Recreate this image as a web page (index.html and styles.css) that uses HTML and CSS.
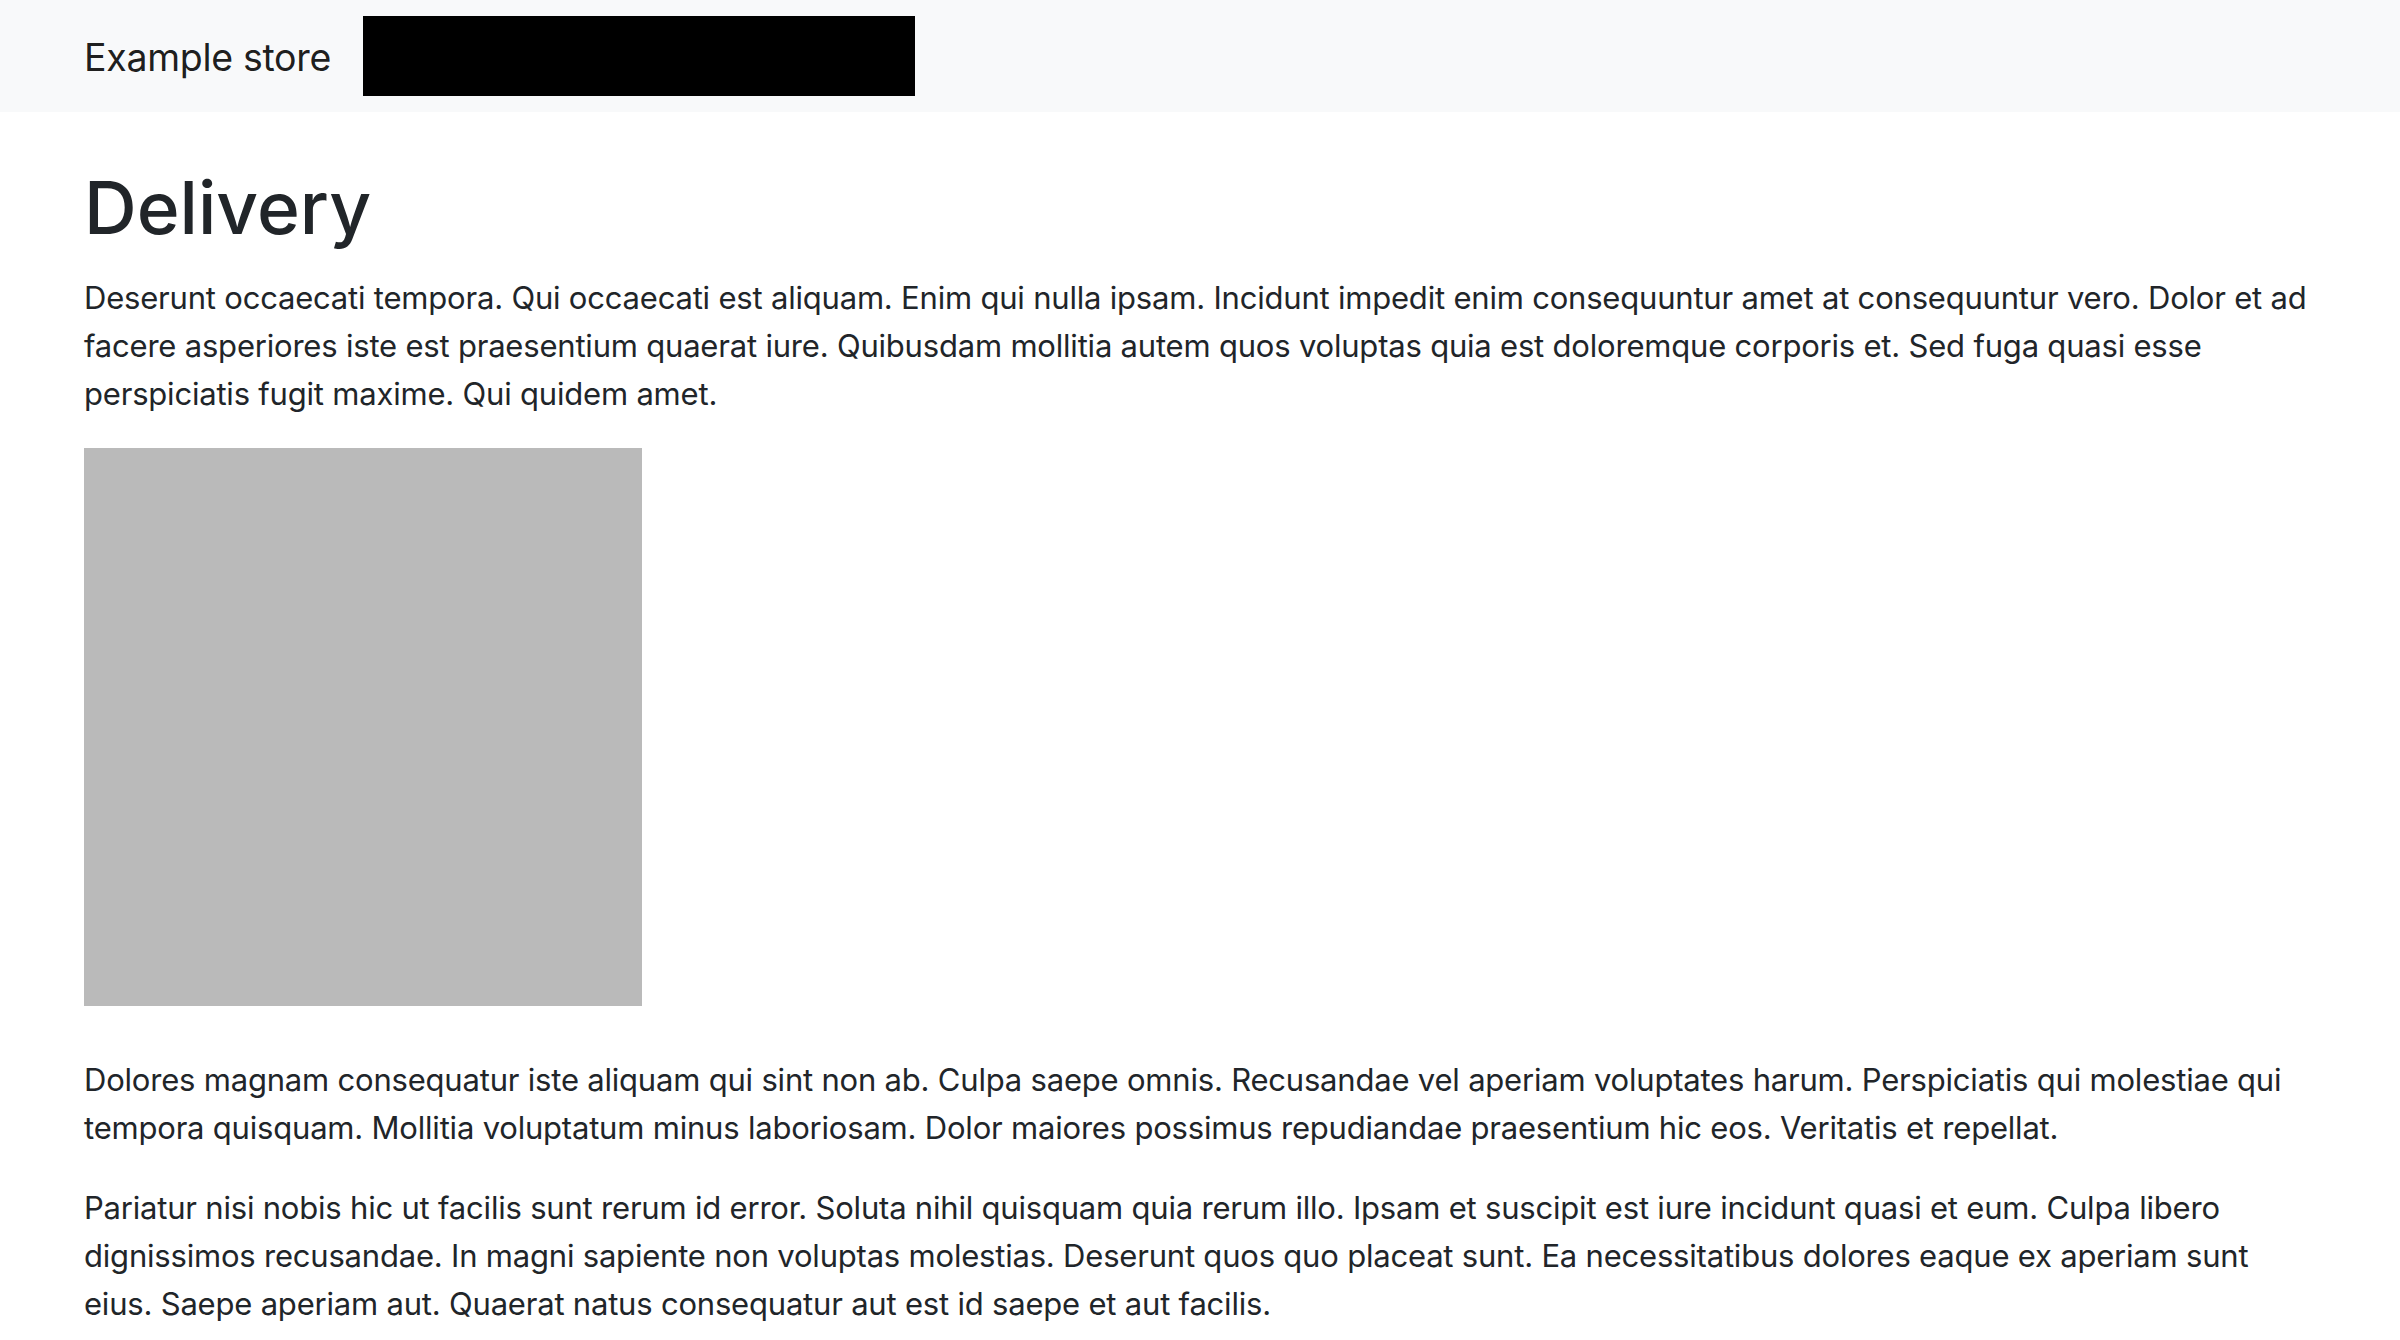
FILE: index.html
```html
<!DOCTYPE html>
<html lang="en">
<head>
<meta charset="utf-8">
<title>Delivery - Example store</title>
<link rel="stylesheet" href="styles.css">
</head>
<body>
<nav class="navbar">
  <a class="brand" href="#">Example store</a>
  <div class="redacted"></div>
</nav>
<main class="container">
  <h1 class="title">Delivery</h1>
  <p class="text">Deserunt occaecati tempora. Qui occaecati est aliquam. Enim qui nulla ipsam. Incidunt impedit enim consequuntur amet at consequuntur vero. Dolor et ad facere asperiores iste est praesentium quaerat iure. Quibusdam mollitia autem quos voluptas quia est doloremque corporis et. Sed fuga quasi esse perspiciatis fugit maxime. Qui quidem amet.</p>
  <div class="picture"></div>
  <p class="text">Dolores magnam consequatur iste aliquam qui sint non ab. Culpa saepe omnis. Recusandae vel aperiam voluptates harum. Perspiciatis qui molestiae qui tempora quisquam. Mollitia voluptatum minus laboriosam. Dolor maiores possimus repudiandae praesentium hic eos. Veritatis et repellat.</p>
  <p class="text">Pariatur nisi nobis hic ut facilis sunt rerum id error. Soluta nihil quisquam quia rerum illo. Ipsam et suscipit est iure incidunt quasi et eum. Culpa libero dignissimos recusandae. In magni sapiente non voluptas molestias. Deserunt quos quo placeat sunt. Ea necessitatibus dolores eaque ex aperiam sunt eius. Saepe aperiam aut. Quaerat natus consequatur aut est id saepe et aut facilis.</p>
</main>
</body>
</html>
```

FILE: styles.css
```css
html, body {
  margin: 0;
  padding: 0;
  background: #ffffff;
}

body {
  font-family: Inter, "Noto Sans", "Liberation Sans", sans-serif;
  color: #212529;
  font-size: 31px;
  letter-spacing: -0.2px;
  line-height: 48px;
}

.navbar {
  display: flex;
  align-items: center;
  height: 112px;
  padding: 0 84px;
  background: #f8f9fa;
  box-sizing: border-box;
}

.brand {
  font-size: 37.5px;
  letter-spacing: -0.3px;
  line-height: 60px;
  padding-top: 3px;
  color: rgba(0, 0, 0, 0.9);
  text-decoration: none;
  margin-right: 32px;
}

.redacted {
  width: 552px;
  height: 80px;
  background: #000000;
}

.container {
  padding: 0 84px;
}

.title {
  font-size: 73px;
  font-weight: 500;
  letter-spacing: 0;
  line-height: 87.6px;
  margin: 52px 0 20.4px;
}

.text {
  margin: 0 0 30px;
  padding-top: 2px;
}

.picture {
  width: 558px;
  height: 558px;
  background: #bababa;
  margin: 0 0 48px;
}
```
